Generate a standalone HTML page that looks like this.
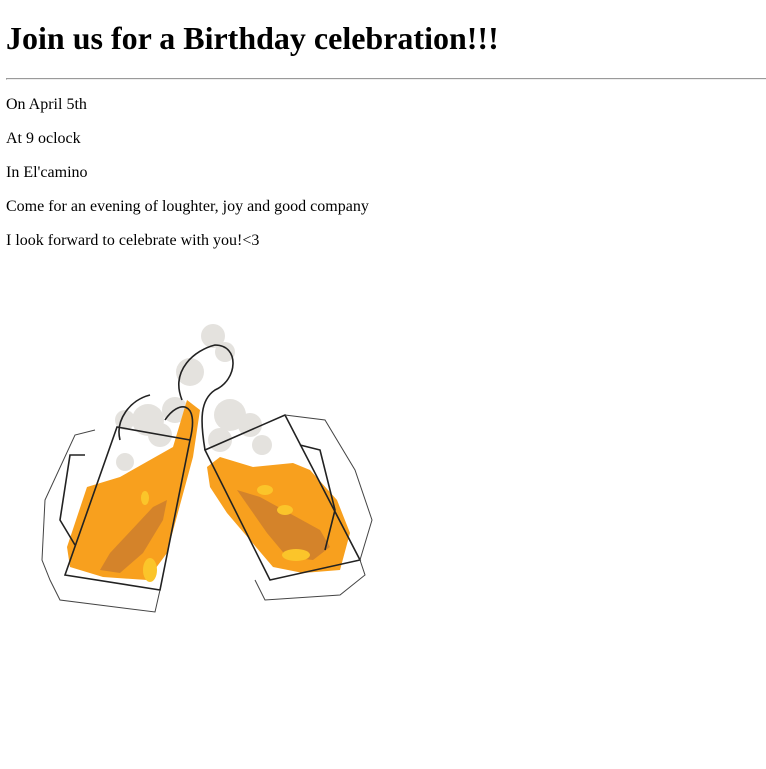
<!DOCTYPE html>
<html><head><meta charset="utf-8"><style>
body{margin:6px;font-family:"Liberation Serif",serif;font-size:16px;color:#000;background:#fff}
h1{font-size:32px;margin:19.5px 0 21.44px}
hr{margin:0 -10px 8px 0}
p{margin:16px 0}
svg{position:absolute;left:0;top:0}
</style></head><body>
<h1>Join us for a Birthday celebration!!!</h1>
<hr>
<p>On April 5th</p>
<p>At 9 oclock</p>
<p>In El'camino</p>
<p>Come for an evening of loughter, joy and good company</p>
<p>I look forward to celebrate with you!&lt;3</p>
<svg width="766" height="769" viewBox="0 0 766 769">
<g fill="#e4e2de">
<circle cx="213" cy="336" r="12"/><circle cx="225" cy="352" r="10"/><circle cx="190" cy="372" r="14"/><circle cx="175" cy="410" r="13"/><circle cx="148" cy="420" r="16"/><circle cx="125" cy="420" r="10"/><circle cx="160" cy="435" r="12"/><circle cx="125" cy="462" r="9"/>
<circle cx="230" cy="415" r="16"/><circle cx="250" cy="425" r="12"/><circle cx="262" cy="445" r="10"/><circle cx="220" cy="440" r="12"/>
</g>
<polygon fill="#f8a01e" points="67,547 87,487 120,477 173,447 187,400 200,410 193,457 167,553 147,580 103,577 70,567"/>
<polygon fill="#d4832a" points="100,570 110,553 153,507 167,500 163,520 143,553 120,573"/>
<polygon fill="#f8a01e" points="207,467 220,457 253,467 293,463 310,470 337,500 350,533 340,570 303,573 273,567 227,513 210,487"/>
<polygon fill="#d4832a" points="237,490 260,497 320,530 330,547 313,560 287,557 267,533"/>
<g fill="#fbc52a"><ellipse cx="150" cy="570" rx="7" ry="12"/><ellipse cx="296" cy="555" rx="14" ry="6"/><ellipse cx="145" cy="498" rx="4" ry="7"/><ellipse cx="265" cy="490" rx="8" ry="5"/><ellipse cx="285" cy="510" rx="8" ry="5"/></g>
<g fill="none" stroke="#222" stroke-width="1.6">
<path d="M117,427 L190,440 L160,590 L65,575 Z"/>
<path d="M205,450 L285,415 L360,560 L270,580 Z"/>
<path d="M85,455 L70,455 L60,520 L75,545 M300,445 L320,450 L335,510 L325,550"/>
<path d="M182,400 C170,370 195,350 215,345 C240,345 238,380 215,390 C200,400 200,420 205,450 M150,395 C130,400 115,420 120,440 M165,420 C178,400 200,400 190,440"/>
</g>
<g fill="none" stroke="#444" stroke-width="1">
<path d="M95,430 L75,435 L45,500 L42,560 L50,580 L60,600 L155,612 L160,590"/>
<path d="M285,415 L325,420 L355,470 L372,520 L360,560 L365,575 L340,595 L265,600 L255,580"/>
</g>
</svg>
</body></html>
